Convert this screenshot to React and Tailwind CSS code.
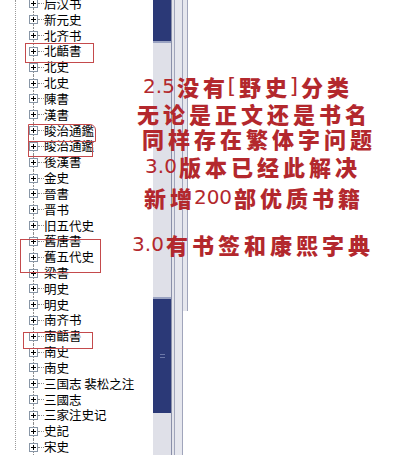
import React from "react";

const items = [
  "后汉书", "新元史", "北齐书", "北齬書", "北史", "北史", "陳書", "漢書",
  "睃治通鑑", "睃治通鑑", "後漢書", "金史", "晉書", "晋书", "旧五代史",
  "舊唐書", "舊五代史", "梁書", "明史", "明史", "南齐书", "南齬書", "南史",
  "南史", "三国志 裴松之注", "三國志", "三家注史记", "史記", "宋史",
];

function PlusBox() {
  return (
    <svg width="9" height="9" viewBox="0 0 9 9" className="block shrink-0">
      <rect x="0.5" y="0.5" width="8" height="8" fill="#fff" stroke="#8896a6" />
      <line x1="2" y1="4.5" x2="7" y2="4.5" stroke="#000" />
      <line x1="4.5" y1="2" x2="4.5" y2="7" stroke="#000" />
    </svg>
  );
}

function Row({ text }) {
  return (
    <div className="flex items-center h-[15.85px]">
      <div className="flex flex-col items-center w-[9px] h-full shrink-0">
        <div className="flex-1 w-0 border-l border-dotted border-[#8c8c8c]" />
        <PlusBox />
        <div className="flex-1 w-0 border-l border-dotted border-[#8c8c8c]" />
      </div>
      <div className="w-[6px] h-0 border-t border-dotted border-[#8c8c8c] shrink-0" />
      <span className="text-[12.5px] leading-[14px] text-black whitespace-nowrap">{text}</span>
    </div>
  );
}

const cjk = { fontFamily: '"Noto Sans CJK SC", "Noto Sans CJK TC", sans-serif' };
const lat = { fontFamily: '"DejaVu Sans", Verdana, sans-serif' };

function Num({ children }) {
  return <span style={lat} className="block text-[20px] leading-[24px] font-normal">{children}</span>;
}
function Zh({ children }) {
  return (
    <>
      {Array.from(children).map((c, i) => (
        <span
          key={i}
          style={cjk}
          className="block w-[26px] text-center text-[22px] leading-[24px] font-black"
        >
          {c}
        </span>
      ))}
    </>
  );
}
function Br({ children }) {
  return <span style={lat} className="block w-[10px] text-center text-[22px] leading-[24px] font-normal">{children}</span>;
}

export default function App() {
  return (
    <div className="relative w-[400px] h-[460px] bg-white overflow-hidden flex" style={cjk}>
      {/* tree panel */}
      <div className="flex w-[153px] h-[455px] shrink-0">
        <div className="w-[15px] shrink-0" />
        <div className="w-0 h-[450px] border-l border-dotted border-[#9a9a9a]" />
        <div className="pl-[13px] -mt-[4px] flex flex-col">
          {items.map((t, i) => (
            <Row key={i} text={t} />
          ))}
        </div>
      </div>

      {/* scrollbar */}
      <div className="flex h-[455px] shrink-0">
        <div className="w-[18px] bg-[#dfe0e8] flex flex-col">
          <div className="h-[43px] bg-[#2b3977] border-b-2 border-[#9aa3c2]" />
          <div className="h-[254px]" />
          <div className="h-[116px] bg-[#2b3977] border-t-2 border-[#9aa3c2] flex flex-col items-center justify-center gap-[2px]">
            <div className="w-[5px] h-px bg-[#6b77a8]" />
            <div className="w-[5px] h-px bg-[#6b77a8]" />
          </div>
          <div className="flex-1" />
        </div>
        <div className="w-px bg-[#8a90aa]" />
        <div className="w-[2px] bg-[#e3e4eb]" />
        <div className="w-px bg-[#a0a5bb]" />
        <div className="w-[7px] bg-[#e6e7ee]" />
        <div className="w-px bg-[#a0a5bb]" />
        <div className="w-[4px] h-[311px] bg-[#e6e7ee]" />
        <div className="w-px h-[311px] bg-[#a0a5bb]" />
      </div>

      {/* red boxes */}
      <div className="absolute left-[25px] top-[43px] w-[69px] h-[20px] border border-[#c44a4c]" />
      <div className="absolute left-[28px] top-[124px] w-[68px] h-[18px] border border-[#c44a4c] rounded-tr-[6px]" />
      <div className="absolute left-[28px] top-[141px] w-[65px] h-[16px] border border-[#c44a4c]" />
      <div className="absolute left-[20px] top-[239px] w-[81px] h-[34px] border border-[#c44a4c]" />
      <div className="absolute left-[23px] top-[332px] w-[70px] h-[17px] border border-[#c44a4c]" />

      {/* annotation */}
      <div className="absolute left-[127px] top-[74px] w-[250px] flex flex-col items-center text-[#b3282d]">
        <div className="flex items-center h-[24px] whitespace-nowrap ml-[-10px]">
          <Num>2.5</Num><Zh>没有</Zh><Br>[</Br><Zh>野史</Zh><Br>]</Br><Zh>分类</Zh>
        </div>
        <div className="flex items-center h-[24px] mt-[3px] whitespace-nowrap">
          <Zh>无论是正文还是书名</Zh>
        </div>
        <div className="flex items-center h-[24px] mt-[1px] whitespace-nowrap ml-[10px]">
          <Zh>同样存在繁体字问题</Zh>
        </div>
        <div className="flex items-center h-[24px] mt-[4px] whitespace-nowrap">
          <Num>3.0</Num><Zh>版本已经此解决</Zh>
        </div>
        <div className="flex items-center h-[24px] mt-[7px] whitespace-nowrap">
          <Zh>新增</Zh><Num>200</Num><Zh>部优质书籍</Zh>
        </div>
        <div className="flex items-center h-[24px] mt-[23px] whitespace-nowrap">
          <Num>3.0</Num><Zh>有书签和康熙字典</Zh>
        </div>
      </div>
    </div>
  );
}
